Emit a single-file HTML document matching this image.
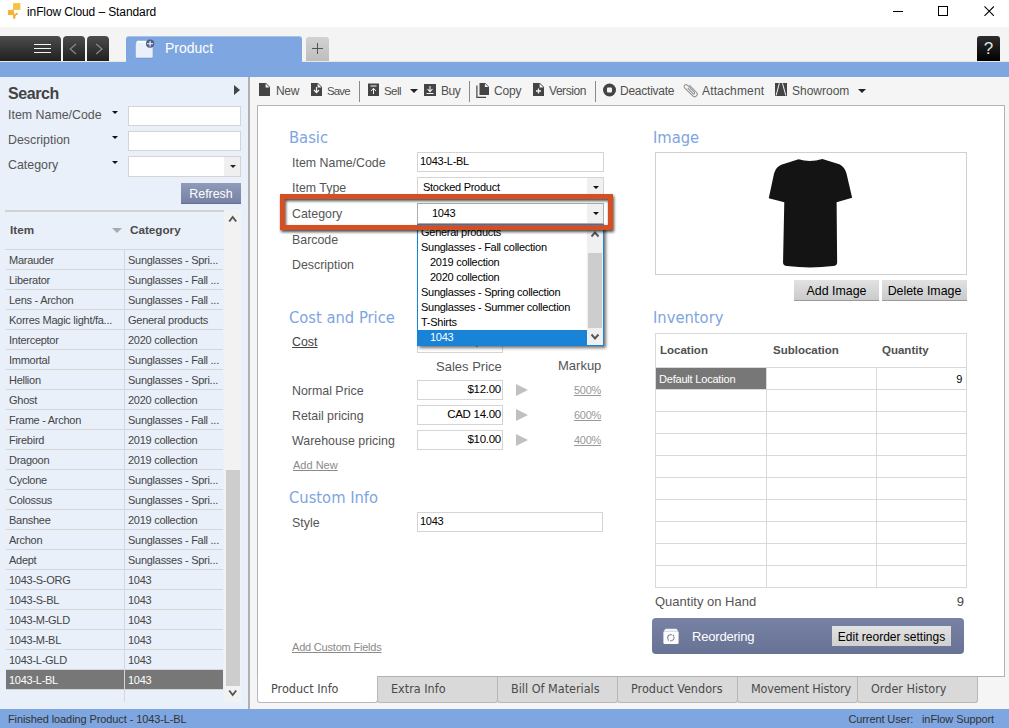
<!DOCTYPE html>
<html><head><meta charset="utf-8"><title>inFlow Cloud – Standard</title>
<style>
*{box-sizing:border-box;margin:0;padding:0}
html,body{width:1009px;height:728px;overflow:hidden;background:#f0f0f0}
body{position:relative;font-family:"Liberation Sans",sans-serif;font-size:12px;color:#444}
.a{position:absolute;white-space:nowrap}
.ms{font-family:"Liberation Sans",sans-serif;font-size:11px;letter-spacing:-0.27px}
.lbl{font-size:12.4px;color:#555;line-height:16px}
.h{font-family:"DejaVu Sans Condensed","DejaVu Sans",sans-serif;font-size:16.4px;color:#7ea5e2;line-height:20px}
.inp{background:#fff;border:1px solid #d4d4d4}
.tb{font-size:12px;color:#505050;line-height:14px}
.row{position:absolute;left:6px;width:217px;height:20px;border-bottom:1px solid #d6d6d6}
.row span{position:absolute;top:0;line-height:20px;color:#444;white-space:nowrap}
.row .c1{left:3px}
.row .c2{left:122px}
.row.sel{background:#777}
.row.sel span{color:#fff}
.lnk{text-decoration:underline;color:#999}
.btab{position:absolute;top:677px;height:26px;padding-top:0px;width:121px;background:#d9d9d9;border:1px solid #b8b8b8;border-top:none;border-radius:0 0 3px 3px;font-family:"DejaVu Sans Condensed","DejaVu Sans",sans-serif;font-size:12.5px;color:#4a4a4a;line-height:23px;padding-left:13px;white-space:nowrap}
.cell{position:absolute;border-right:1px solid #d9d9d9;border-bottom:1px solid #d9d9d9}
</style></head><body>
<!-- title bar -->
<div class="a" style="left:0;top:0;width:1009px;height:27px;background:#fff"></div>
<svg class="a" style="left:6px;top:2px" width="16" height="18" viewBox="6 2 16 18"><rect x="13.100" y="3.100" width="7.300" height="6.800" fill="#f4c346"/><rect x="7.900" y="10.100" width="5" height="5" fill="#f2b236"/><path d="M12.500 9.500L14.200 15.500" stroke="#f2b236" stroke-width="1.600"/><rect x="13.100" y="15" width="2.200" height="3.700" fill="#f1aa30"/><path d="M14.500 16L16.700 13.900" stroke="#f1aa30" stroke-width="1.300"/><circle cx="16.700" cy="13.900" r="1.100" fill="#f1aa30"/></svg>
<div class="a" style="left:27px;top:5px;font-size:12px;color:#000;line-height:14px;letter-spacing:-0.1px">inFlow Cloud – Standard</div>
<div class="a" style="left:893px;top:11px;width:10px;height:1px;background:#000"></div>
<div class="a" style="left:938px;top:6px;width:10px;height:10px;border:1px solid #000"></div>
<svg class="a" style="left:984px;top:6px" width="10.400" height="10.400" viewBox="0 0 11 11"><path d="M0.5 0.5L10.5 10.5M10.5 0.5L0.5 10.5" stroke="#000" stroke-width="1.1"/></svg>

<!-- tab strip -->
<div class="a" style="left:0;top:27px;width:1009px;height:34px;background:#f4f4f4"></div>
<div class="a" style="left:0;top:61px;width:1009px;height:1px;background:#ece6e0"></div><div class="a" style="left:0;top:62px;width:1009px;height:15px;background:#7ea6e0"></div>
<div class="a" style="left:0;top:36px;width:61px;height:25px;background:linear-gradient(#4c4c4c,#202020);border-radius:0 4px 0 0"></div>
<div class="a" style="left:34px;top:44px;width:17px;height:1px;background:#f4f4f4;box-shadow:0 4px 0 #f4f4f4,0 8px 0 #f4f4f4"></div>
<div class="a" style="left:63px;top:36px;width:22px;height:25px;background:linear-gradient(#4c4c4c,#202020);border-radius:4px 4px 0 0"></div>
<div class="a" style="left:87px;top:36px;width:22px;height:25px;background:linear-gradient(#4c4c4c,#202020);border-radius:4px 4px 0 0"></div>
<svg class="a" style="left:63px;top:36px" width="46" height="25" viewBox="0 0 46 25"><path d="M13 8L7.200 13L13 18M33.200 8L39 13L33.200 18" fill="none" stroke="#8c8c8c" stroke-width="1.100"/></svg>
<div class="a" style="left:126px;top:36px;width:176px;height:26px;background:#7ea6e0;border-radius:3px 3px 0 0;border-top:1px solid #a8c3eb"></div>
<svg class="a" style="left:134px;top:38px" width="22" height="22" viewBox="134 38 22 22"><rect x="136" y="41.600" width="16.600" height="17" rx="1.500" fill="#6f94cc"/><path d="M137.300 40.800h14.200l1.200 2.100h-16.800z" fill="#fafcff"/><rect x="135.800" y="43.100" width="16.900" height="14.600" rx="1" fill="#e9f0fa"/><circle cx="150.100" cy="43.700" r="4.100" fill="#505d86"/><path d="M150.100 40.900v5.600M147.100 43.700h6" stroke="#fff" stroke-width="1.100"/></svg>
<div class="a" style="left:165px;top:39px;font-size:14px;color:#fff;line-height:18px">Product</div>
<div class="a" style="left:306px;top:37px;width:23px;height:24px;background:linear-gradient(#d2d2d2,#bebebe);border-radius:3px 3px 0 0"></div>
<div class="a" style="left:312px;top:48px;width:11px;height:1px;background:#555"></div>
<div class="a" style="left:317px;top:43px;width:1px;height:11px;background:#555"></div>
<div class="a" style="left:977px;top:36px;width:23px;height:25px;background:linear-gradient(#2e2e2e,#000);border-radius:3px 3px 0 0;color:#e4e4e4;font-size:17px;line-height:26px;text-align:center">?</div>
<!-- left panel -->
<div class="a" style="left:0;top:77px;width:248px;height:632px;background:#e9f0fa"></div>
<div class="a" style="left:248px;top:77px;width:2px;height:632px;background:#b0b0b0"></div>
<div class="a" style="left:8px;top:84px;font-size:16px;font-weight:bold;color:#444;line-height:20px;letter-spacing:-0.4px">Search</div>
<div class="a" style="left:234px;top:85px;width:0;height:0;border-left:6px solid #444;border-top:5px solid transparent;border-bottom:5px solid transparent"></div>
<div class="a lbl" style="left:8px;top:107px">Item Name/Code</div>
<div class="a lbl" style="left:8px;top:132px">Description</div>
<div class="a lbl" style="left:8px;top:157px">Category</div>
<div class="a" style="left:111.500px;top:111px;width:0;height:0;border-top:3.500px solid #111;border-left:3.300px solid transparent;border-right:3.300px solid transparent"></div>
<div class="a" style="left:111.500px;top:136px;width:0;height:0;border-top:3.500px solid #111;border-left:3.300px solid transparent;border-right:3.300px solid transparent"></div>
<div class="a" style="left:111.500px;top:161px;width:0;height:0;border-top:3.500px solid #111;border-left:3.300px solid transparent;border-right:3.300px solid transparent"></div>
<div class="a inp" style="left:128px;top:106px;width:113px;height:20px"></div>
<div class="a inp" style="left:128px;top:131px;width:113px;height:20px"></div>
<div class="a inp" style="left:128px;top:156px;width:113px;height:21px"></div>
<div class="a" style="left:224px;top:157px;width:16px;height:19px;background:#efefef"></div>
<div class="a" style="left:230px;top:165px;width:0;height:0;border-top:3px solid #222;border-left:3px solid transparent;border-right:3px solid transparent"></div>
<div class="a" style="left:181px;top:183px;width:60px;height:21px;background:linear-gradient(#909ab9,#7681a5);border-bottom:1px solid #646e90;color:#fff;font-size:12.4px;line-height:22.500px;text-align:center">Refresh</div>
<!-- list -->
<div class="a" style="left:5px;top:210px;width:219px;height:2px;background:#d2d2d2"></div>
<div class="a" style="left:5px;top:249px;width:219px;height:1px;background:#d6d6d6"></div>
<div class="a" style="left:10px;top:222px;font-size:11.7px;font-weight:bold;color:#4c4c4c;line-height:16px">Item</div>
<div class="a" style="left:130px;top:222px;font-size:11.7px;font-weight:bold;color:#4c4c4c;line-height:16px">Category</div>
<div class="a" style="left:112px;top:228px;width:0;height:0;border-top:5px solid #aaa;border-left:5px solid transparent;border-right:5px solid transparent"></div>
<div class="a" style="left:124px;top:249px;width:1px;height:453px;background:#d4d8de;z-index:2"></div>
<div class="row" style="top:250px"><span class="c1 ms">Marauder</span><span class="c2 ms">Sunglasses - Spri...</span></div>
<div class="row" style="top:270px"><span class="c1 ms">Liberator</span><span class="c2 ms">Sunglasses - Fall ...</span></div>
<div class="row" style="top:290px"><span class="c1 ms">Lens - Archon</span><span class="c2 ms">Sunglasses - Fall ...</span></div>
<div class="row" style="top:310px"><span class="c1 ms">Korres Magic light/fa...</span><span class="c2 ms">General products</span></div>
<div class="row" style="top:330px"><span class="c1 ms">Interceptor</span><span class="c2 ms">2020 collection</span></div>
<div class="row" style="top:350px"><span class="c1 ms">Immortal</span><span class="c2 ms">Sunglasses - Fall ...</span></div>
<div class="row" style="top:370px"><span class="c1 ms">Hellion</span><span class="c2 ms">Sunglasses - Spri...</span></div>
<div class="row" style="top:390px"><span class="c1 ms">Ghost</span><span class="c2 ms">2020 collection</span></div>
<div class="row" style="top:410px"><span class="c1 ms">Frame - Archon</span><span class="c2 ms">Sunglasses - Fall ...</span></div>
<div class="row" style="top:430px"><span class="c1 ms">Firebird</span><span class="c2 ms">2019 collection</span></div>
<div class="row" style="top:450px"><span class="c1 ms">Dragoon</span><span class="c2 ms">2019 collection</span></div>
<div class="row" style="top:470px"><span class="c1 ms">Cyclone</span><span class="c2 ms">Sunglasses - Spri...</span></div>
<div class="row" style="top:490px"><span class="c1 ms">Colossus</span><span class="c2 ms">Sunglasses - Spri...</span></div>
<div class="row" style="top:510px"><span class="c1 ms">Banshee</span><span class="c2 ms">2019 collection</span></div>
<div class="row" style="top:530px"><span class="c1 ms">Archon</span><span class="c2 ms">Sunglasses - Fall ...</span></div>
<div class="row" style="top:550px"><span class="c1 ms">Adept</span><span class="c2 ms">Sunglasses - Spri...</span></div>
<div class="row" style="top:570px"><span class="c1 ms">1043-S-ORG</span><span class="c2 ms">1043</span></div>
<div class="row" style="top:590px"><span class="c1 ms">1043-S-BL</span><span class="c2 ms">1043</span></div>
<div class="row" style="top:610px"><span class="c1 ms">1043-M-GLD</span><span class="c2 ms">1043</span></div>
<div class="row" style="top:630px"><span class="c1 ms">1043-M-BL</span><span class="c2 ms">1043</span></div>
<div class="row" style="top:650px"><span class="c1 ms">1043-L-GLD</span><span class="c2 ms">1043</span></div>
<div class="row sel" style="top:670px"><span class="c1 ms">1043-L-BL</span><span class="c2 ms">1043</span></div>
<!-- scrollbar -->
<div class="a" style="left:224px;top:210px;width:17px;height:492px;background:#f2f2f2"></div>
<div class="a" style="left:226px;top:470px;width:14px;height:216px;background:#cdcdcd"></div>
<svg class="a" style="left:224px;top:210px" width="17" height="17" viewBox="0 0 17 17"><path d="M5.200 11.500L8.700 7L12.200 11.500" fill="none" stroke="#555" stroke-width="1.900"/></svg>
<svg class="a" style="left:224px;top:685px" width="17" height="17" viewBox="0 0 17 17"><path d="M5.200 5.500L8.700 10L12.200 5.500" fill="none" stroke="#555" stroke-width="1.900"/></svg>
<!-- main -->
<div class="a" style="left:250px;top:77px;width:759px;height:633px;background:#f5f5f5"></div>
<!-- toolbar -->
<svg class="a" style="left:258px;top:82px" width="620" height="17" viewBox="0 0 620 17">
 <g fill="#444">
  <!-- new -->
  <path d="M1 1h7l4 4v9H1z"/><path d="M7.6 1.6v3.8h3.8z" fill="#f5f5f5"/>
  <!-- save -->
  <path d="M53 1h7l4 4v9H53z"/><path d="M59.6 1.6v3.8h3.8z" fill="#f5f5f5"/><path d="M58.5 5v5M56 8l2.5 2.7L61 8" stroke="#f5f5f5" stroke-width="1.2" fill="none"/>
  <!-- sell -->
  <rect x="110" y="1.500" width="11" height="12.500"/><path d="M112.500 4h6M115.500 12V6.500M113 9l2.500-2.700L118 9" stroke="#f5f5f5" stroke-width="1" fill="none"/>
  <!-- buy -->
  <rect x="166" y="2" width="12" height="12"/><path d="M168.500 11.500h7M172 4v5.500M169.500 7l2.500 2.700L174.500 7" stroke="#f5f5f5" stroke-width="1.1" fill="none"/>
  <!-- copy -->
  <path d="M221.500 1h5.800l3.700 3.700v8.300h-9.500z"/><path d="M218.300 3.500h1.200v11.300h8.500V16h-9.700z"/><path d="M226.900 1.500v3.600h3.600z" fill="#f5f5f5"/>
  <!-- version -->
  <path d="M275 1h7l4 4v9h-11z"/><path d="M281.600 1.600v3.800h3.800z" fill="#f5f5f5"/><path d="M280.500 6.500v5M278 9h5" stroke="#f5f5f5" stroke-width="1.300" fill="none"/>
  <!-- deactivate -->
  <circle cx="351.500" cy="8" r="6.500"/><rect x="349" y="5.500" width="5" height="5" rx="1" fill="#f5f5f5"/>
  <!-- showroom -->
  <rect x="517" y="1" width="12" height="13"/><path d="M521.300 1.300L518.100 13.500M524.500 1.300L527.800 13.500" stroke="#f5f5f5" stroke-width="1" fill="none"/>
 </g>
 <!-- attachment -->
 <g transform="translate(432.700 8.200) rotate(-45)"><path d="M2.600 -4.500V5.500A2.600 2.600 0 0 1 -2.600 5.500V-6A1.900 1.900 0 0 1 1.200 -6V4A0.950 0.950 0 0 1 -0.700 4V-3.500" fill="none" stroke="#8e8e8e" stroke-width="1"/></g>
</svg>
<div class="a tb" style="left:276px;top:84px;letter-spacing:-0.3px">New</div>
<div class="a tb" style="left:327px;top:84px;font-size:11.4px;letter-spacing:-0.8px">Save</div>
<div class="a" style="left:359px;top:81px;width:1px;height:21px;background:#8a8a8a"></div>
<div class="a tb" style="left:384px;top:84px;font-size:11.5px;letter-spacing:-0.55px">Sell</div>
<div class="a" style="left:410px;top:89px;width:0;height:0;border-top:4px solid #222;border-left:4px solid transparent;border-right:4px solid transparent"></div>
<div class="a tb" style="left:441px;top:84px;letter-spacing:-0.45px">Buy</div>
<div class="a" style="left:469px;top:81px;width:1px;height:21px;background:#8a8a8a"></div>
<div class="a tb" style="left:494px;top:84px;letter-spacing:-0.2px">Copy</div>
<div class="a tb" style="left:549px;top:84px;letter-spacing:-0.45px">Version</div>
<div class="a" style="left:595px;top:81px;width:1px;height:21px;background:#8a8a8a"></div>
<div class="a tb" style="left:620px;top:84px;letter-spacing:-0.24px">Deactivate</div>
<div class="a tb" style="left:702px;top:84px;letter-spacing:0.15px">Attachment</div>
<div class="a tb" style="left:792px;top:84px">Showroom</div>
<div class="a" style="left:858px;top:89px;width:0;height:0;border-top:4px solid #222;border-left:4px solid transparent;border-right:4px solid transparent"></div>

<!-- content box -->
<div class="a" style="left:257px;top:105px;width:748px;height:572px;background:#fff;border:1px solid #b2b2b2"></div>

<div class="a h" style="left:289px;top:128px">Basic</div>
<div class="a lbl" style="left:292px;top:155px">Item Name/Code</div>
<div class="a inp" style="left:417px;top:152px;width:187px;height:20px"></div>
<div class="a ms" style="left:420px;top:154px;color:#000;line-height:14px">1043-L-BL</div>
<div class="a lbl" style="left:292px;top:180px">Item Type</div>
<div class="a inp" style="left:417px;top:177px;width:187px;height:21px"></div>
<div class="a ms" style="left:423px;top:180px;color:#000;line-height:14px">Stocked Product</div>
<div class="a" style="left:587px;top:178px;width:16px;height:19px;background:#f0f0f0"></div>
<div class="a" style="left:593px;top:186px;width:0;height:0;border-top:3px solid #111;border-left:3px solid transparent;border-right:3px solid transparent"></div>

<div class="a lbl" style="left:292px;top:232px">Barcode</div>
<div class="a lbl" style="left:292px;top:257px">Description</div>

<div class="a h" style="left:289px;top:308px">Cost and Price</div>
<div class="a lbl" style="left:292px;top:334px;text-decoration:underline;color:#444">Cost</div>
<div class="a inp" style="left:417px;top:333px;width:86px;height:20px"></div>
<div class="a ms" style="left:417px;top:335px;width:84px;text-align:right;color:#000;line-height:14px;font-size:11.5px">$2.00</div>
<div class="a" style="left:436px;top:359px;font-size:13px;color:#555;line-height:16px">Sales Price</div>
<div class="a" style="left:558px;top:358px;font-size:13px;color:#555;line-height:16px">Markup</div>

<div class="a lbl" style="left:292px;top:383px">Normal Price</div>
<div class="a lbl" style="left:292px;top:408px">Retail pricing</div>
<div class="a lbl" style="left:292px;top:433px">Warehouse pricing</div>
<div class="a inp" style="left:417px;top:380px;width:86px;height:20px"></div>
<div class="a inp" style="left:417px;top:405px;width:86px;height:20px"></div>
<div class="a inp" style="left:417px;top:430px;width:86px;height:20px"></div>
<div class="a ms" style="left:417px;top:382px;width:84px;text-align:right;color:#000;line-height:14px;font-size:11.5px">$12.00</div>
<div class="a ms" style="left:417px;top:407px;width:84px;text-align:right;color:#000;line-height:14px;font-size:11.5px">CAD 14.00</div>
<div class="a ms" style="left:417px;top:432px;width:84px;text-align:right;color:#000;line-height:14px;font-size:11.5px">$10.00</div>
<div class="a" style="left:516px;top:384px;width:0;height:0;border-left:12px solid #c0c0c0;border-top:6.5px solid transparent;border-bottom:6.5px solid transparent"></div>
<div class="a" style="left:516px;top:409px;width:0;height:0;border-left:12px solid #c0c0c0;border-top:6.5px solid transparent;border-bottom:6.5px solid transparent"></div>
<div class="a" style="left:516px;top:434px;width:0;height:0;border-left:12px solid #c0c0c0;border-top:6.5px solid transparent;border-bottom:6.5px solid transparent"></div>
<div class="a ms lnk" style="left:540px;top:383px;width:61px;text-align:right;line-height:14px">500%</div>
<div class="a ms lnk" style="left:540px;top:408px;width:61px;text-align:right;line-height:14px">600%</div>
<div class="a ms lnk" style="left:540px;top:433px;width:61px;text-align:right;line-height:14px">400%</div>
<div class="a lnk" style="left:293px;top:458px;font-size:11px;line-height:14px;color:#8a8a8a">Add New</div>

<div class="a h" style="left:289px;top:488px">Custom Info</div>
<div class="a lbl" style="left:292px;top:515px">Style</div>
<div class="a inp" style="left:417px;top:512px;width:186px;height:20px"></div>
<div class="a ms" style="left:420px;top:514px;color:#000;line-height:14px">1043</div>
<div class="a lnk" style="left:292px;top:640px;font-size:11px;line-height:14px;color:#8a8a8a;letter-spacing:-0.2px">Add Custom Fields</div>

<!-- category combobox -->
<div class="a lbl" style="left:292px;top:206px">Category</div>
<div class="a inp" style="left:417px;top:203px;width:187px;height:21px;border-color:#adadad"></div>
<div class="a ms" style="left:432px;top:206px;color:#000;line-height:14px">1043</div>
<div class="a" style="left:587px;top:204px;width:16px;height:19px;background:#f0f0f0"></div>
<div class="a" style="left:593px;top:212px;width:0;height:0;border-top:3px solid #111;border-left:3px solid transparent;border-right:3px solid transparent"></div>

<!-- dropdown list -->
<div class="a" style="left:417px;top:224px;width:187px;height:122px;background:#fff;border:1px solid #1883d7;box-shadow:2px 2px 3px rgba(0,0,0,.55);overflow:hidden">
 <div class="a ms" style="left:3px;top:0px;color:#000;line-height:15px">General products</div>
 <div class="a ms" style="left:3px;top:15px;color:#000;line-height:15px">Sunglasses - Fall collection</div>
 <div class="a ms" style="left:12px;top:30px;color:#000;line-height:15px">2019 collection</div>
 <div class="a ms" style="left:12px;top:45px;color:#000;line-height:15px">2020 collection</div>
 <div class="a ms" style="left:3px;top:60px;color:#000;line-height:15px">Sunglasses - Spring collection</div>
 <div class="a ms" style="left:3px;top:75px;color:#000;line-height:15px">Sunglasses - Summer collection</div>
 <div class="a ms" style="left:3px;top:90px;color:#000;line-height:15px">T-Shirts</div>
 <div class="a" style="left:0;top:105px;width:169px;height:15px;background:#1883d7"></div>
 <div class="a ms" style="left:12px;top:105px;color:#fff;line-height:15px">1043</div>
 <div class="a" style="left:169px;top:0;width:16px;height:120px;background:#f0f0f0"></div>
 <div class="a" style="left:170px;top:28px;width:14px;height:75px;background:#cdcdcd"></div>
 <svg class="a" style="left:169px;top:0px" width="16" height="16" viewBox="0 0 16 16"><path d="M4.500 11.500L8 7.500L11.500 11.500" fill="none" stroke="#555" stroke-width="1.900"/></svg>
 <svg class="a" style="left:169px;top:104px" width="16" height="16" viewBox="0 0 16 16"><path d="M4.500 5.500L8 9.500L11.500 5.500" fill="none" stroke="#555" stroke-width="1.900"/></svg>
</div>

<!-- highlight box -->
<div class="a" style="left:280px;top:194px;width:333px;height:36px;border:5px solid #d54f22;filter:drop-shadow(1.500px 2px 1.800px rgba(0,0,0,.7))"></div>

<!-- right column -->
<div class="a h" style="left:653px;top:128px">Image</div>
<div class="a" style="left:655px;top:152px;width:312px;height:123px;background:#fff;border:1px solid #d0d0d0"></div>
<svg class="a" style="left:750px;top:150px" width="120" height="130" viewBox="0 0 672 728"><path d="M272 52 Q338 72 405 50 L500 80 Q530 95 540 130 L572 268 L485 292 L488 630 Q488 648 465 650 Q338 665 208 650 Q185 648 185 630 L192 292 L105 270 L135 130 Q145 95 175 82 Z" fill="#141414"/></svg>
<div class="a" style="left:794px;top:280px;width:85px;height:21px;background:linear-gradient(#e2e2e2,#cacaca);border-bottom:1px solid #9a9a9a;color:#000;font-size:12.4px;line-height:22.500px;text-align:center">Add Image</div>
<div class="a" style="left:882px;top:280px;width:85px;height:21px;background:linear-gradient(#e2e2e2,#cacaca);border-bottom:1px solid #9a9a9a;color:#000;font-size:12.4px;line-height:22.500px;text-align:center">Delete Image</div>

<div class="a h" style="left:653px;top:308px">Inventory</div>
<div class="a" style="left:655px;top:333px;width:312px;height:255px;background:#fff;border:1px solid #d9d9d9"></div>
<div class="a" style="left:656px;top:367px;width:310px;height:1px;background:#d9d9d9"></div>
<div class="a" style="left:656px;top:389px;width:310px;height:1px;background:#d9d9d9"></div>
<div class="a" style="left:656px;top:411px;width:310px;height:1px;background:#d9d9d9"></div>
<div class="a" style="left:656px;top:433px;width:310px;height:1px;background:#d9d9d9"></div>
<div class="a" style="left:656px;top:455px;width:310px;height:1px;background:#d9d9d9"></div>
<div class="a" style="left:656px;top:477px;width:310px;height:1px;background:#d9d9d9"></div>
<div class="a" style="left:656px;top:499px;width:310px;height:1px;background:#d9d9d9"></div>
<div class="a" style="left:656px;top:521px;width:310px;height:1px;background:#d9d9d9"></div>
<div class="a" style="left:656px;top:543px;width:310px;height:1px;background:#d9d9d9"></div>
<div class="a" style="left:656px;top:565px;width:310px;height:1px;background:#d9d9d9"></div>
<div class="a" style="left:766px;top:367px;width:1px;height:220px;background:#d9d9d9"></div>
<div class="a" style="left:876px;top:367px;width:1px;height:220px;background:#d9d9d9"></div>
<div class="a" style="left:660px;top:342px;font-size:11.5px;font-weight:bold;color:#505050;line-height:16px">Location</div>
<div class="a" style="left:773px;top:342px;font-size:11.5px;font-weight:bold;color:#505050;line-height:16px">Sublocation</div>
<div class="a" style="left:882px;top:342px;font-size:11.5px;font-weight:bold;color:#505050;line-height:16px">Quantity</div>
<div class="a" style="left:656px;top:368px;width:110px;height:21px;background:#777"></div>
<div class="a ms" style="left:659px;top:371px;color:#fff;line-height:16px;letter-spacing:-0.2px">Default Location</div>
<div class="a ms" style="left:900px;top:371px;width:62px;text-align:right;color:#000;line-height:16px">9</div>

<div class="a" style="left:655px;top:594px;font-size:13px;color:#555;line-height:16px">Quantity on Hand</div>
<div class="a" style="left:900px;top:594px;width:64px;text-align:right;font-size:13px;color:#444;line-height:16px">9</div>
<div class="a" style="left:652px;top:618px;width:312px;height:36px;background:linear-gradient(#7882a4,#687295);border-radius:4px"></div>
<svg class="a" style="left:663px;top:628px" width="16" height="17" viewBox="0 0 16 17"><path d="M2.600 0.700h10.800l1.800 2.200H0.800z" fill="#f3f3f6"/><rect x="0.400" y="3.300" width="15.200" height="12.700" rx="1.200" fill="#fdfdfe"/><circle cx="7.800" cy="9.700" r="3.100" fill="none" stroke="#8a8fa0" stroke-width="1.100" stroke-dasharray="7.200 2.540" transform="rotate(-30 7.800 9.700)"/><path d="M10.200 6.200l1.300 1.700-2.100 0.200zM5.400 13.200l-1.300-1.700 2.100-0.200z" fill="#8a8fa0"/></svg>
<div class="a" style="left:692px;top:629px;font-size:13px;color:#fff;line-height:16px;letter-spacing:-0.2px">Reordering</div>
<div class="a" style="left:832px;top:626px;width:119px;height:20px;background:linear-gradient(#e2e2e2,#d0d0d0);color:#000;font-size:12px;line-height:23px;overflow:hidden;text-align:center">Edit reorder settings</div>

<!-- bottom tabs -->
<div class="btab" style="left:377px">Extra Info</div>
<div class="btab" style="left:497px">Bill Of Materials</div>
<div class="btab" style="left:617px">Product Vendors</div>
<div class="btab" style="left:737px;letter-spacing:-0.2px">Movement History</div>
<div class="btab" style="left:857px">Order History</div>
<div class="btab" style="left:257px;background:#fff;top:676px;height:27px;padding-top:1px">Product Info</div>
<!-- status -->
<div class="a" style="left:0;top:709px;width:1009px;height:19px;background:#7ea6e0"></div>
<div class="a" style="left:8px;top:712px;font-size:11px;color:#333;line-height:14px;letter-spacing:-0.1px">Finished loading Product - 1043-L-BL</div>
<div class="a" style="right:15px;top:712px;font-size:11px;color:#333;line-height:14px;letter-spacing:-0.1px">Current User:&nbsp;&nbsp;&nbsp;inFlow Support</div>
</body></html>
